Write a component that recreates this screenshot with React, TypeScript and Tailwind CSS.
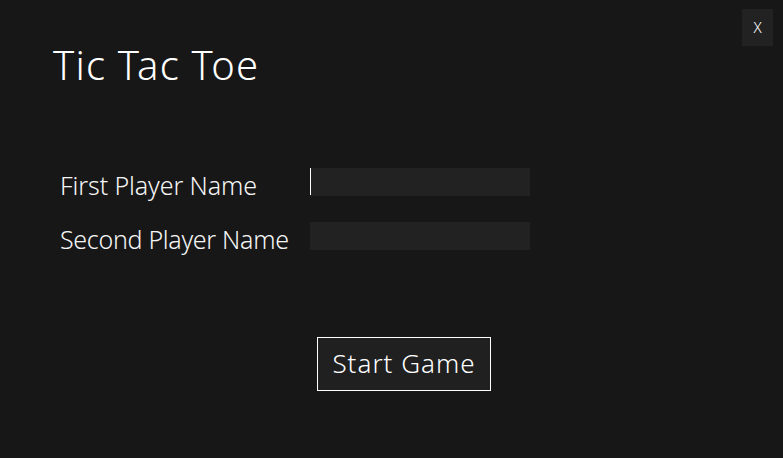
import React from "react";

export default function App() {
  const font = { fontFamily: '"Noto Sans", sans-serif' };
  return (
    <div className="w-[783px] h-[458px] bg-[#171717] text-[#f5f5f5] relative overflow-hidden font-light" style={font}>
      <button className="absolute right-[10px] top-[9px] w-[31px] h-[37px] bg-[#222222] text-[15px] text-white flex items-center justify-center leading-none font-light">
        X
      </button>
      <div className="pl-[53px] pt-[39px]">
        <h1 className="text-[40px] leading-[52px] font-light text-white tracking-[1.2px]">Tic Tac Toe</h1>
      </div>
      <div className="mt-[77px] pl-[60px] flex flex-col gap-[26px]">
        <div className="flex items-start h-[28px]">
          <label className="w-[250px] text-[25px] leading-[28px] pt-[3px] tracking-[-0.1px]">First Player Name</label>
          <div className="w-[220px] h-[28px] bg-[#222222] relative">
            <div className="absolute left-0 top-0 w-[1px] h-[27px] bg-white" />
          </div>
        </div>
        <div className="flex items-start h-[28px]">
          <label className="w-[250px] text-[25px] leading-[28px] pt-[3px] tracking-[-0.3px]">Second Player Name</label>
          <div className="w-[220px] h-[28px] bg-[#222222]" />
        </div>
      </div>
      <div className="mt-[87px] pl-[317px]">
        <button className="w-[174px] h-[54px] border border-white bg-[#202020] text-[26px] text-white flex items-center justify-center font-light pb-[2px] tracking-[1px]">
          Start Game
        </button>
      </div>
    </div>
  );
}
